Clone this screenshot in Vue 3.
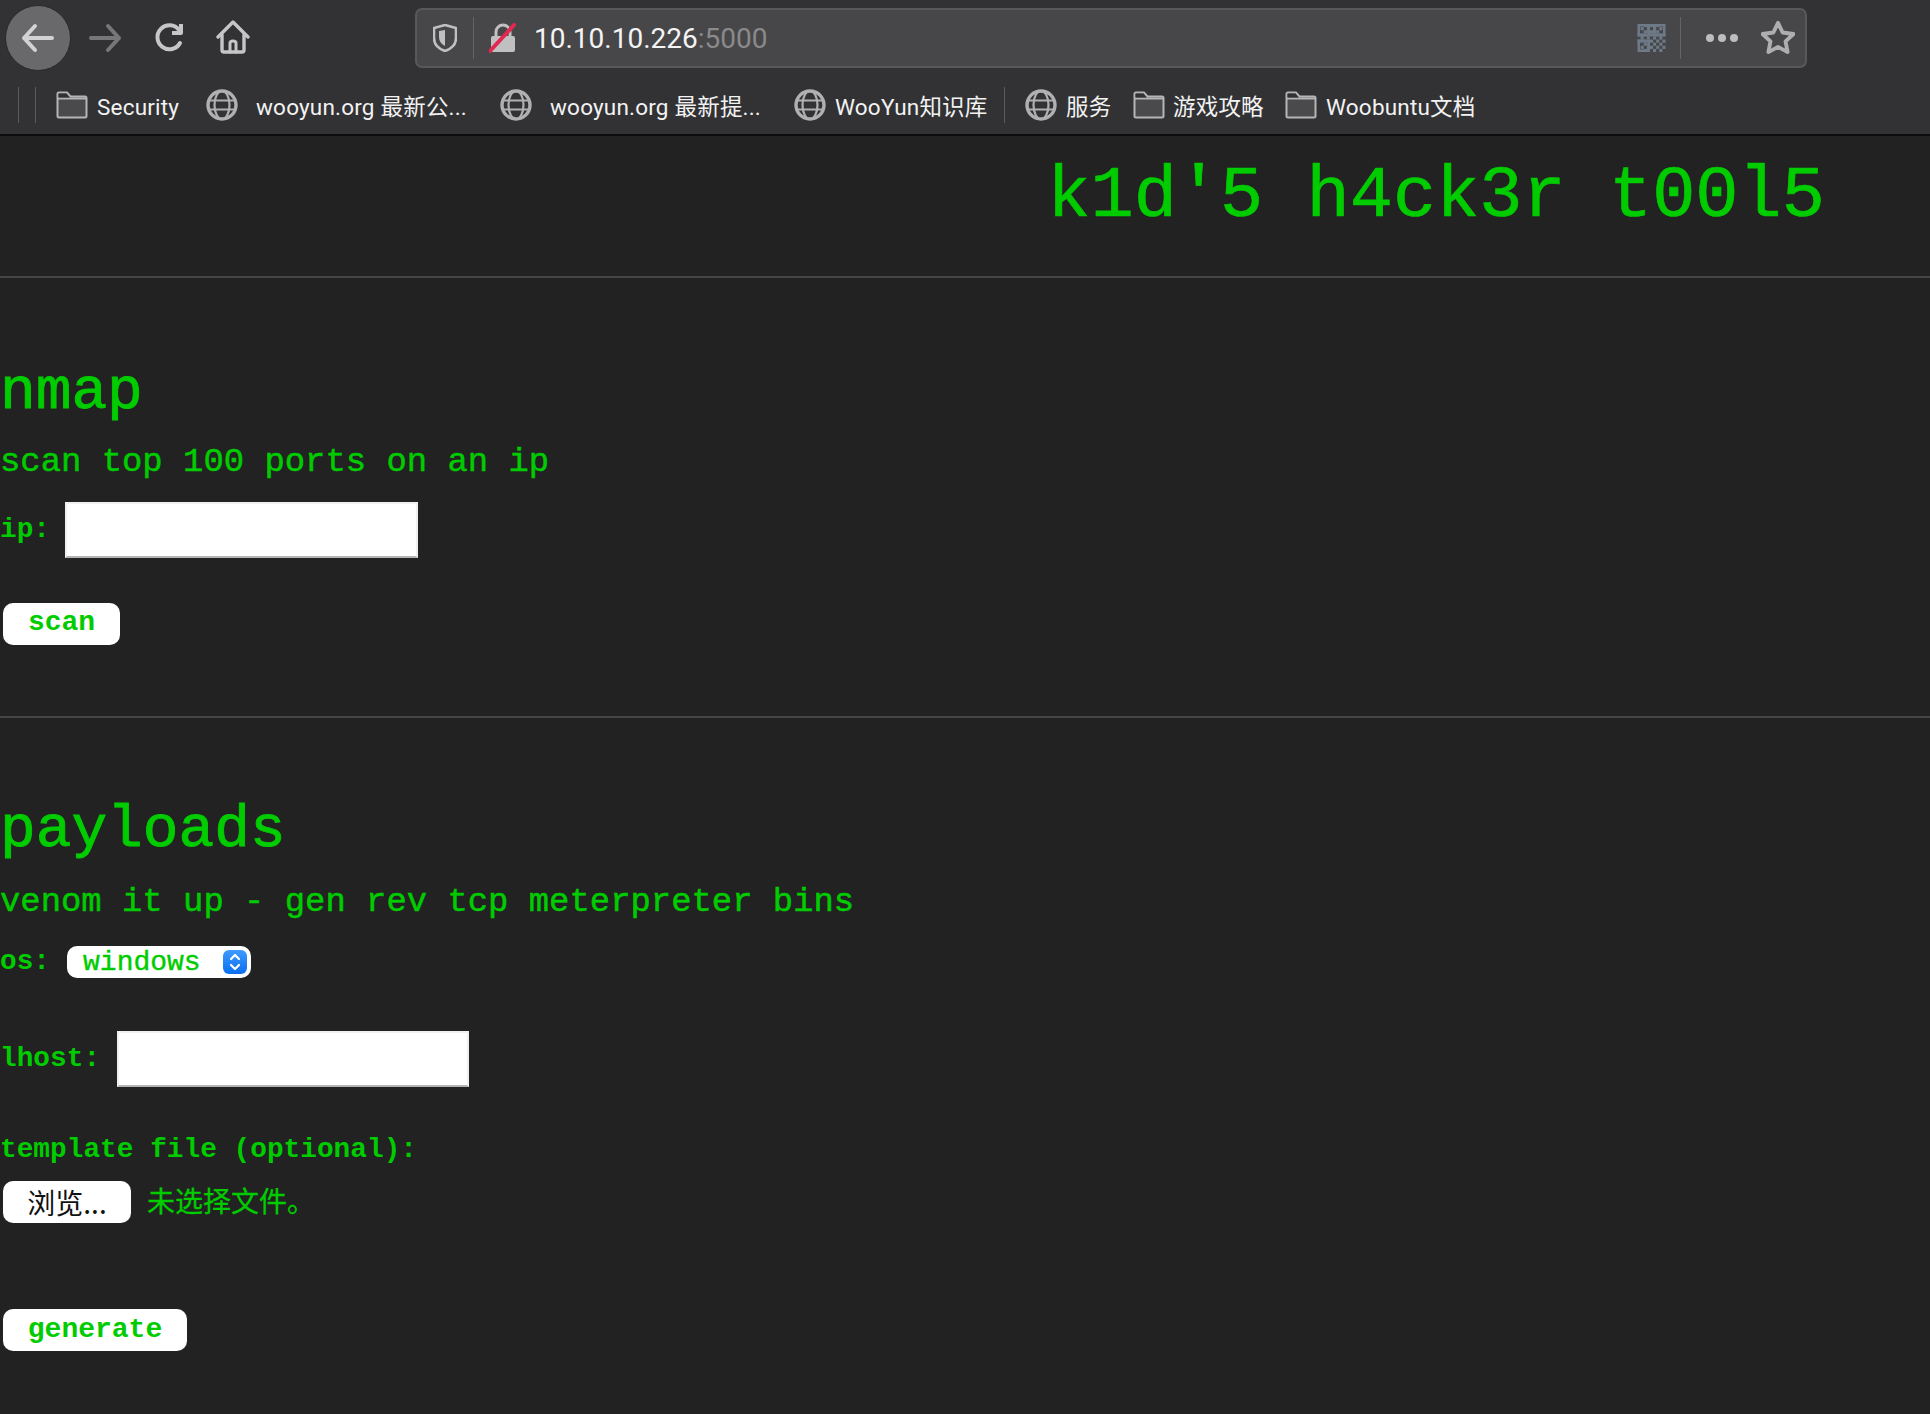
<script setup>
const bookmarks = [
  { icon: 'folder', label: 'Security', cls: 'b-sec', w: 84 },
  { icon: 'globe', label: 'wooyun.org 最新公...', cls: 'b-w1', w: 209 },
  { icon: 'globe', label: 'wooyun.org 最新提...', cls: 'b-w2', w: 210 },
  { icon: 'globe', label: 'WooYun知识库', cls: 'b-w3', w: 148 },
  { icon: 'sep', cls: 'b-sep' },
  { icon: 'globe', label: '服务', cls: 'b-fw', w: 42 },
  { icon: 'folder', label: '游戏攻略', cls: 'b-yx', w: 88 },
  { icon: 'folder', label: 'Woobuntu文档', cls: 'b-wb', w: 149 }
]
const qr = [
  [0,0,1,1,1,1,1,0,0],[0,1,0,1,0,1,0,1,0],[0,0,1,1,1,1,1,0,0],[1,1,1,0,1,0,1,1,1],[0,1,0,1,0,1,0,1,0],
  [1,1,1,0,1,0,1,0,1],[0,0,1,1,0,1,0,1,0],[0,1,0,1,1,0,1,0,1],[0,0,1,1,0,1,0,1,0]
]
</script>

<template>
  <div class="page">
    <header class="chrome">
      <div class="nav">
        <button class="circle" aria-label="back">
          <svg width="34" height="30" viewBox="0 0 34 30" fill="none" stroke="#d2d2d3" stroke-width="4" stroke-linecap="round" stroke-linejoin="round"><path d="M3 15h28M14 3 3 15l11 12"/></svg>
        </button>
        <svg class="fwd" width="34" height="30" viewBox="0 0 34 30" fill="none" stroke="#77777a" stroke-width="4" stroke-linecap="round" stroke-linejoin="round"><path d="M3 15h28M20 3l11 12-11 12"/></svg>
        <svg class="reload" width="32" height="32" viewBox="0 0 32 32" fill="none" stroke="#c6c6c7" stroke-width="4" stroke-linecap="round" stroke-linejoin="round"><path d="M26 21a12 12 0 1 1-1-13"/><path d="M27 2v9h-9" stroke-linecap="butt"/></svg>
        <svg class="home" width="34" height="34" viewBox="0 0 34 34" fill="none" stroke="#c6c6c7" stroke-width="3.4" stroke-linejoin="round" stroke-linecap="round"><path d="M2 17 17 2l15 15"/><path d="M6 15v15q0 2 2 2h18q2 0 2-2V15"/><path d="M14 32v-9q0-2 3-2t3 2v9" stroke-width="3"/></svg>
      </div>
      <div class="urlbar">
        <svg class="shield" width="24" height="28" viewBox="0 0 24 28"><path d="M12 1 23 4v10c0 7-5 11-11 13C6 25 1 21 1 14V4z" fill="none" stroke="#c0c0c1" stroke-width="2.6"/><path d="M12 6v16c-4-2-6-5-6-9V7z" fill="#c0c0c1"/></svg>
        <i class="vsep first"></i>
        <svg class="lock" width="28" height="30" viewBox="0 0 28 30"><rect x="2" y="13" width="24" height="16" rx="2" fill="#c0c0c1"/><path d="M7 13V9a7 7 0 0 1 14 0v4" fill="none" stroke="#c0c0c1" stroke-width="3"/><path d="M1 28 25 2" stroke="#e22850" stroke-width="4" stroke-linecap="round"/></svg>
        <div class="url"><span class="host">10.10.10.226</span><span class="port">:5000</span></div>
        <svg class="qr" width="29" height="28" viewBox="0 0 9 9">
          <template v-for="(row, y) in qr" :key="y">
            <template v-for="(c, x) in row" :key="x">
              <rect v-if="c" :x="x" :y="y" width="1" height="1" fill="#6e7a88"/>
            </template>
          </template>
          <rect x=".4" y=".4" width="3.2" height="3.2" fill="none" stroke="#6e7a88" stroke-width=".8"/>
          <rect x="5.4" y=".4" width="3.2" height="3.2" fill="none" stroke="#6e7a88" stroke-width=".8"/>
          <rect x=".4" y="5.4" width="3.2" height="3.2" fill="none" stroke="#6e7a88" stroke-width=".8"/>
        </svg>
        <i class="vsep second"></i>
        <div class="dots"><b></b><b></b><b></b></div>
        <svg class="star" width="34" height="34" viewBox="2 2 28 28"><path d="M16 3.500l3.800 8 8.900 1.200-6.500 6.100 1.700 8.800L16 23.300 8.100 27.600l1.700-8.800-6.500-6.100 8.900-1.200z" fill="none" stroke="#aeaeaf" stroke-width="3.200" stroke-linejoin="round"/></svg>
      </div>
      <nav class="bookmarks">
        <i class="bsep"></i><i class="bsep two"></i>
        <template v-for="b in bookmarks" :key="b.cls">
          <i v-if="b.icon === 'sep'" class="bsep" :class="b.cls"></i>
          <div v-else class="bm" :class="b.cls">
            <svg v-if="b.icon === 'folder'" width="32" height="28" viewBox="0 0 32 28"><path d="M1.500 25V3q0-1.500 1.500-1.500h8l3.500 4H29q1.500 0 1.500 1.500v18q0 1.500-1.500 1.500H3q-1.500 0-1.500-1.500z" fill="#4a4a4d" stroke="#b5b5b6" stroke-width="2"/><path d="M1.500 7.500h29" stroke="#b5b5b6" stroke-width="2" fill="none"/><path d="M2.500 2.500h8l3 4h-11z" fill="#323234"/></svg>
            <svg v-else width="32" height="32" viewBox="0 0 32 32" fill="none" stroke="#b0b0b1" stroke-width="2.200"><circle cx="16" cy="16" r="14" stroke-width="3.400"/><ellipse cx="16" cy="16" rx="7.500" ry="14"/><path d="M3 11.500h26M3 20.500h26"/></svg>
            <span :style="{ width: b.w + 'px' }">{{ b.label }}</span>
          </div>
        </template>
      </nav>
    </header>

    <main class="content">
      <h1 class="title">k1d'5 h4ck3r t00l5</h1>
      <hr />
      <section class="nmap">
        <h2>nmap</h2>
        <p class="desc">scan top 100 ports on an ip</p>
        <div class="field ip-field">
          <label>ip:</label>
          <input type="text" />
        </div>
        <button class="btn scan">scan</button>
      </section>
      <hr />
      <section class="payloads">
        <h2>payloads</h2>
        <p class="desc">venom it up - gen rev tcp meterpreter bins</p>
        <div class="field os-field">
          <label>os:</label>
          <div class="select">
            <span>windows</span>
            <i class="stepper">
              <svg width="12" height="18" viewBox="0 0 12 18" fill="none" stroke="#fff" stroke-width="2.200" stroke-linecap="round" stroke-linejoin="round"><path d="M2 6l4-4 4 4M2 12l4 4 4-4"/></svg>
            </i>
          </div>
        </div>
        <div class="field lhost-field">
          <label>lhost:</label>
          <input type="text" />
        </div>
        <label class="tpl">template file (optional):</label>
        <div class="file">
          <button class="btn browse">浏览...</button>
          <span>未选择文件。</span>
        </div>
        <button class="btn generate">generate</button>
      </section>
    </main>
  </div>
</template>

<style>
html, body { margin: 0; background: #222; }
</style>

<style scoped>
.page { width: 1930px; height: 1414px; overflow: hidden; background: #222; font-family: "Liberation Mono", monospace; color: #0c0; }
.chrome { height: 134px; background: #323234; border-bottom: 2px solid #0c0c0d; display: flex; flex-wrap: wrap; align-content: flex-start; font-family: Roboto, "Noto Sans CJK SC", sans-serif; }
.nav { width: 415px; height: 76px; display: flex; align-items: center; padding-left: 5px; box-sizing: border-box; }
.circle { width: 66px; height: 66px; border-radius: 50%; background: #69696b; border: 1px solid #29292b; padding: 0; display: flex; align-items: center; justify-content: center; box-sizing: border-box; }
.fwd { margin-left: 17px; }
.reload { margin-left: 32px; }
.home { margin-left: 30px; margin-top: -2px; }
.urlbar { width: 1392px; height: 60px; margin-top: 8px; box-sizing: border-box; background: #474749; border: 2px solid #58585b; border-radius: 7px; display: flex; align-items: center; }
.shield { margin-left: 16px; }
.vsep { display: block; width: 1px; height: 42px; background: #646467; }
.vsep.first { margin-left: 16px; }
.lock { margin-left: 15px; }
.url { margin-left: 17px; font-size: 28px; width: 1103px; flex: none; }
.host { color: #f4f4f5; }
.port { color: #8a8a8d; }
.vsep.second { margin-left: 14px; }
.dots { display: flex; gap: 4px; margin-left: 25px; }
.dots b { width: 8px; height: 8px; border-radius: 50%; background: #bdbdbe; }
.star { margin-left: 23px; }
.bookmarks { width: 1930px; height: 58px; display: flex; align-items: center; color: #f2f2f3; font-size: 22.500px; letter-spacing: .2px; padding-left: 18px; box-sizing: border-box; }
.bsep { display: block; width: 1px; height: 36px; background: #5a5a5d; flex: none; }
.bsep.two { margin-left: 16px; }
.bm { display: flex; align-items: center; gap: 9px; white-space: nowrap; flex: none; }
.bm svg { flex: none; }
.bm span { display: block; line-height: 30px; padding-top: 3px; }
.b-sec { margin-left: 20px; }
.b-w1 { margin-left: 25px; gap: 18px; }
.b-w2 { margin-left: 35px; gap: 18px; }
.b-w3 { margin-left: 34px; }
.b-sep { margin-left: 21px; }
.b-fw { margin-left: 20px; }
.b-yx { margin-left: 25px; gap: 8px; }
.b-wb { margin-left: 24px; }

.content { font-size: 34px; }
.title { margin: 0; height: 140px; box-sizing: border-box; padding: 17px 105px 0 0; text-align: right; font-size: 72px; line-height: 88px; font-weight: 400; -webkit-text-stroke: .7px #0c0; }
hr { margin: 0; border: 0; height: 2px; background: #454545; }
.nmap { height: 438px; box-sizing: border-box; padding-top: 79px; }
.payloads { padding-top: 77px; }
h2 { margin: 0; font-size: 59.500px; line-height: 70px; font-weight: 400; -webkit-text-stroke: .9px #0c0; }
.desc { margin: 0; font-size: 33.900px; line-height: 40px; padding-top: 15px; -webkit-text-stroke: .5px #0c0; }
.payloads .desc { padding-top: 17px; }
.field { display: flex; align-items: center; }
label { font-weight: 700; font-size: 27.800px; line-height: 32px; }
input { display: block; box-sizing: border-box; height: 56px; background: #fff; border: 2px solid #f0f0f0; border-bottom-color: #b4b4b4; padding: 0; outline: 0; }
.ip-field { margin-top: 20px; }
.ip-field input { width: 353px; margin-left: 15px; }
.btn { display: block; box-sizing: border-box; height: 42px; margin-left: 3px; padding: 0; border: 0; border-radius: 10px; background: #fff; color: #0c0; font-family: "Liberation Mono", monospace; font-size: 28px; font-weight: 700; line-height: 34px; }
.scan { width: 117px; margin-top: 45px; padding-bottom: 2px; }
.os-field { margin-top: 24px; }
.select { position: relative; margin-left: 17px; box-sizing: border-box; width: 184px; height: 32px; background: #fff; border-radius: 10px; font-size: 28px; line-height: 33px; padding-left: 16px; -webkit-text-stroke: .4px #0c0; }
.stepper { position: absolute; right: 4px; top: 4px; width: 24px; height: 24px; border-radius: 6px; background: linear-gradient(#3d9bff, #0a6ef0); display: flex; align-items: center; justify-content: center; }
.lhost-field { margin-top: 53px; }
.lhost-field input { width: 352px; margin-left: 17px; }
.tpl { display: block; margin-top: 47px; }
.file { display: flex; align-items: center; margin-top: 15px; }
.browse { width: 128px; color: #111; font-family: "Noto Sans CJK SC", sans-serif; font-weight: 400; }
.file span { margin-left: 16px; margin-top: -4px; font-family: "Noto Sans CJK SC", sans-serif; font-size: 28px; line-height: 42px; -webkit-text-stroke: .3px #0c0; }
.generate { width: 184px; margin-top: 86px; padding-bottom: 0; }
</style>
